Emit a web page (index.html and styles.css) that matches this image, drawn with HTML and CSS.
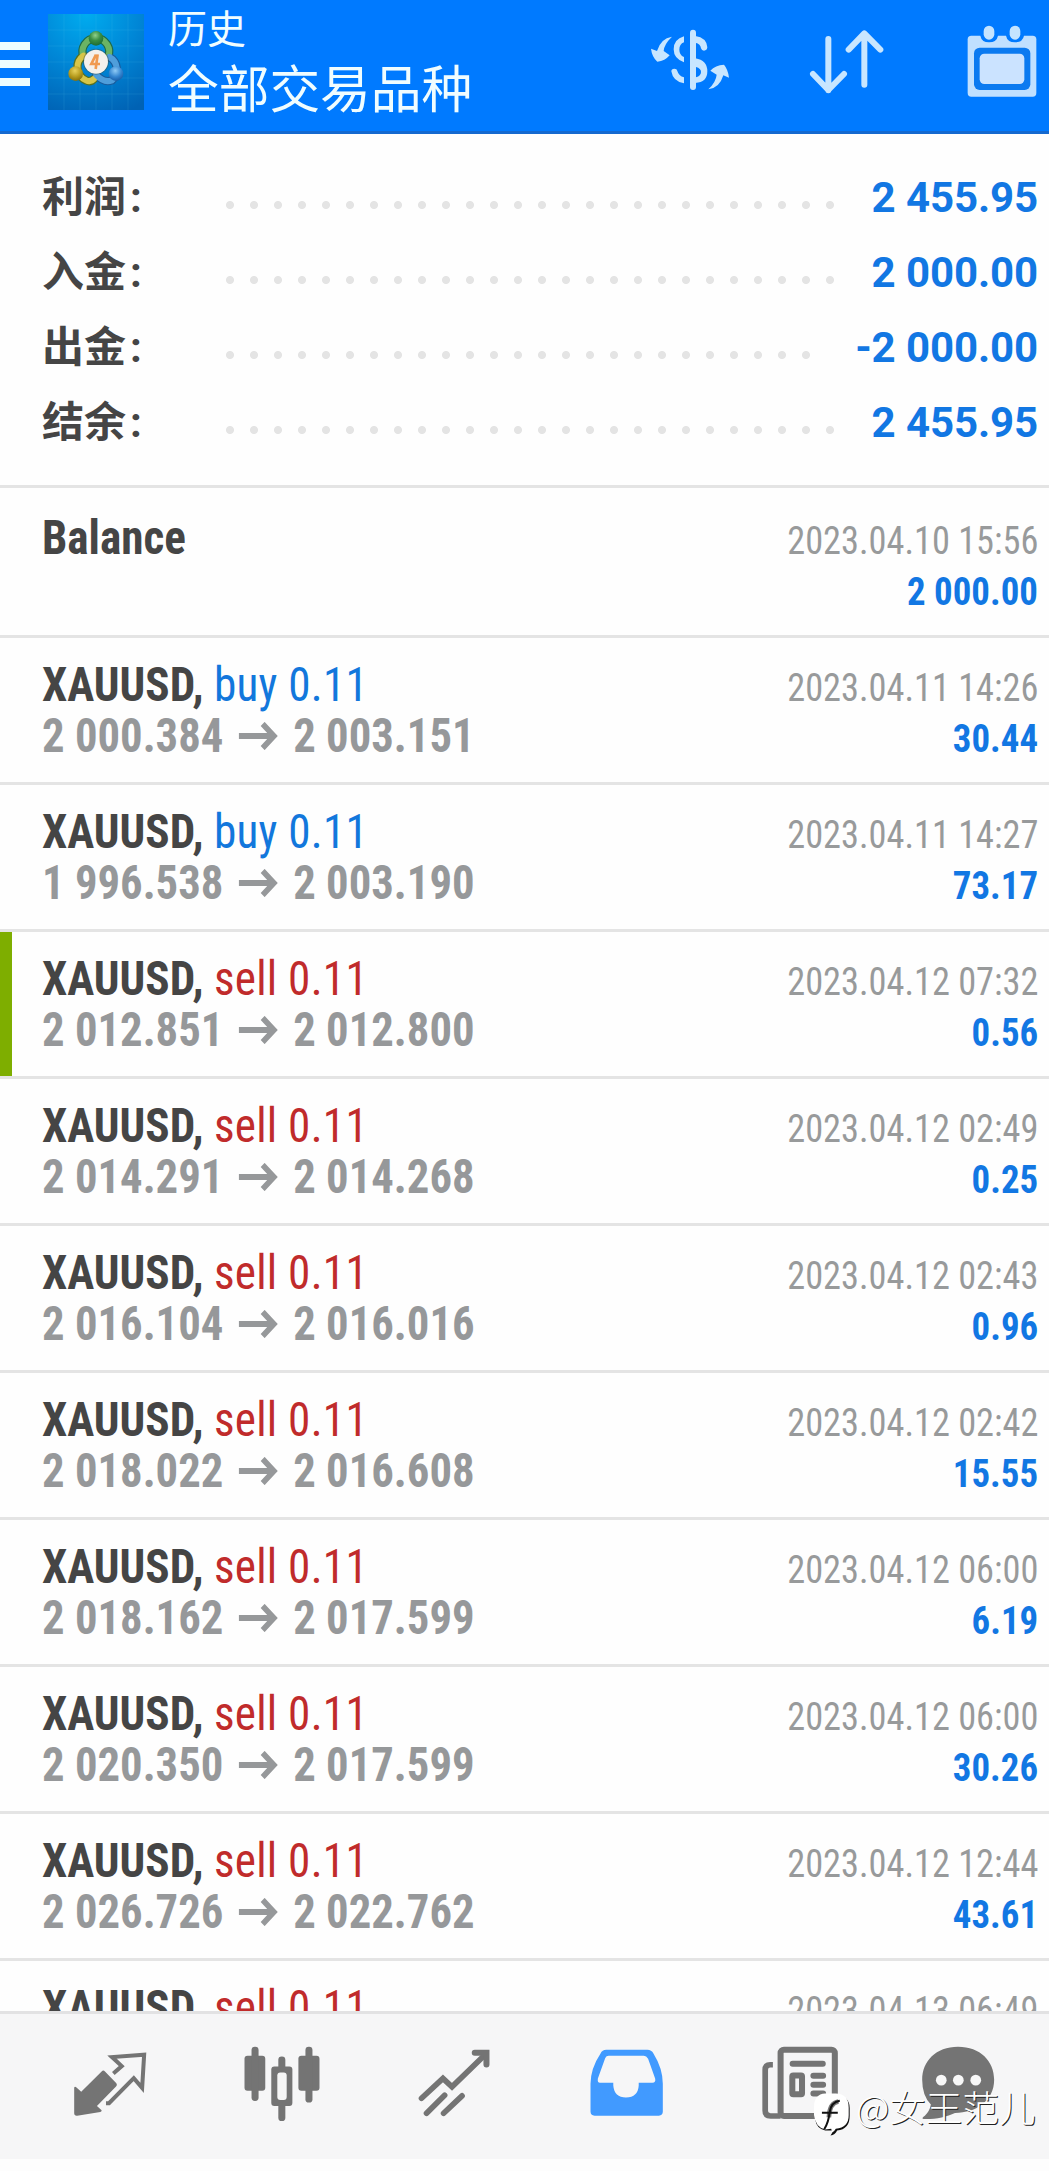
FILE: index.html
```
<!DOCTYPE html>
<html lang="zh-CN">
<head>
<meta charset="utf-8">
<title>历史</title>
<link rel="stylesheet" href="styles.css">
</head>
<body>
<svg class="defs" width="0" height="0">
  <defs>
    <symbol id="arrow" viewBox="0 0 42 28"><path d="M0 14H36M25.5 2L37.5 14L25.5 26" fill="none" stroke="currentColor" stroke-width="6"/></symbol>
  </defs>
</svg>
<div class="app">
  <header class="topbar">
    <div class="menu"><i></i><i></i><i></i></div>
    <svg class="logo" viewBox="12 12 288 288">
      <defs>
        <radialGradient id="bg" cx=".4" cy="0" r="1.1"><stop offset="0" stop-color="#00acef"/><stop offset=".5" stop-color="#0086d6"/><stop offset="1" stop-color="#0062b4"/></radialGradient>
        <radialGradient id="gh" cx=".45" cy=".3" r=".7"><stop offset="0" stop-color="#8fd08a"/><stop offset=".5" stop-color="#3a8f44"/><stop offset="1" stop-color="#1d6b34"/></radialGradient>
        <radialGradient id="yh" cx=".45" cy=".3" r=".7"><stop offset="0" stop-color="#e8d25c"/><stop offset=".6" stop-color="#b59a1c"/><stop offset="1" stop-color="#84700f"/></radialGradient>
        <radialGradient id="bh" cx=".45" cy=".3" r=".7"><stop offset="0" stop-color="#8fcaf5"/><stop offset=".6" stop-color="#3485d0"/><stop offset="1" stop-color="#1a5ea8"/></radialGradient>
      </defs>
      <rect x="12" y="12" width="288" height="288" fill="url(#bg)"/>
      <path d="M60 12V300M108 12V300M156 12V300M204 12V300M252 12V300M12 60H300M12 108H300M12 156H300M12 204H300M12 252H300" stroke="#5cc8f2" stroke-opacity=".2" stroke-width="2"/>
      <g stroke-linecap="round" fill="none">
        <path d="M119 141A40 40 0 1 1 192 141" stroke="#1e6a4a" stroke-width="25"/>
        <path d="M118 137A43 43 0 0 0 126 211Q140 218 152 205" stroke="#57701f" stroke-width="25"/>
        <path d="M196 141A43 43 0 0 1 204 211Q180 220 157 195" stroke="#1a5c9c" stroke-width="25"/>
        <path d="M119 141A40 40 0 1 1 192 141" stroke="#6bb465" stroke-width="18"/>
        <path d="M118 137A43 43 0 0 0 126 211Q140 218 152 205" stroke="#d7c548" stroke-width="18"/>
        <path d="M196 141A43 43 0 0 1 204 211Q180 220 157 195" stroke="#4f9edb" stroke-width="18"/>
      </g>
      <circle cx="156" cy="85" r="22" fill="url(#gh)"/>
      <circle cx="95" cy="191" r="22" fill="url(#yh)"/>
      <circle cx="216" cy="191" r="22" fill="url(#bh)"/>
      <circle cx="156" cy="155" r="39" fill="#3b4d3f" opacity=".45"/>
      <circle cx="156" cy="155" r="36" fill="#f4f1ec"/>
      <path d="M156 134L142 162H168M161 133L155 177" fill="none" stroke="#f09a50" stroke-width="8"/>
    </svg>
    <div class="titles">
      <div class="sub">历史</div>
      <div class="main">全部交易品种</div>
    </div>
    <div class="tools">
      <svg width="80" height="64" viewBox="150 85 240 192" fill="#c8e6ff">
        <rect x="270" y="90" width="18" height="181" rx="9"/>
        <path d="M252 110V128Q238 133 238 150Q238 166 252 172V188Q221 177 221 149Q221 119 252 110ZM214 215Q214 207 223 207Q231 207 232 214Q236 229 252 233V251Q219 246 214 215Z"/>
        <path d="M286 109Q320 114 322 143Q321 153 312 153Q305 153 303 146Q302 133 286 129ZM286 176Q322 182 322 215Q322 248 286 250ZM288 202V233Q303 229 303 217Q303 206 288 202Z" fill-rule="evenodd"/>
        <path d="M216 111Q192 134 191 154L209 167Q195 184 172 186Q156 172 153 147L171 154Q182 116 216 111Z"/>
        <path d="M325 269Q348 247 350 225L331 213Q346 196 372 195Q384 209 387 234L370 227Q359 265 325 269Z"/>
      </svg>
      <svg width="80" height="72" viewBox="620 77 240 216" fill="none" stroke="#c8e6ff" stroke-width="18" stroke-linecap="round" stroke-linejoin="round">
        <path d="M684 116V270M638 221L684 269L731 221M792 253V100M745 148L792 99L840 148"/>
      </svg>
      <svg width="72" height="74" viewBox="1098 72 216 222">
        <rect x="1103" y="107" width="206" height="183" rx="11" fill="#c0e0ff"/>
        <path d="M1141 100H1194V107Q1190 127 1167 127Q1145 127 1141 107ZM1218 100H1272V107Q1268 127 1245 127Q1222 127 1218 107Z" fill="#007aff"/>
        <rect x="1122" y="143" width="169" height="127" rx="17" fill="#0b7af0"/>
        <rect x="1139" y="161" width="134" height="91" rx="14" fill="#cbe3ff"/>
        <rect x="1151" y="77" width="32" height="42" rx="16" fill="#c4e4ff"/>
        <rect x="1229" y="77" width="32" height="42" rx="16" fill="#c4e4ff"/>
      </svg>
    </div>
  </header>

  <section class="summary">
    <div class="sum"><span class="label">利润<span class="colon">:</span></span><span class="dots"></span><span class="value">2 455.95</span></div>
    <div class="sum"><span class="label">入金<span class="colon">:</span></span><span class="dots"></span><span class="value">2 000.00</span></div>
    <div class="sum"><span class="label">出金<span class="colon">:</span></span><span class="dots short"></span><span class="value">-2 000.00</span></div>
    <div class="sum"><span class="label">结余<span class="colon">:</span></span><span class="dots"></span><span class="value">2 455.95</span></div>
  </section>

  <main class="deals">
    <div class="deal balance"><div class="name"><b>Balance</b></div><div class="date">2023.04.10 15:56</div><div class="price">&nbsp;</div><div class="profit">2 000.00</div></div>
    <div class="deal"><div class="name"><b>XAUUSD,</b> <span class="buy">buy 0.11</span></div><div class="date">2023.04.11 14:26</div><div class="price">2 000.384<svg class="to"><use href="#arrow"/></svg>2 003.151</div><div class="profit">30.44</div></div>
    <div class="deal"><div class="name"><b>XAUUSD,</b> <span class="buy">buy 0.11</span></div><div class="date">2023.04.11 14:27</div><div class="price">1 996.538<svg class="to"><use href="#arrow"/></svg>2 003.190</div><div class="profit">73.17</div></div>
    <div class="deal marked"><div class="name"><b>XAUUSD,</b> <span class="sell">sell 0.11</span></div><div class="date">2023.04.12 07:32</div><div class="price">2 012.851<svg class="to"><use href="#arrow"/></svg>2 012.800</div><div class="profit">0.56</div></div>
    <div class="deal"><div class="name"><b>XAUUSD,</b> <span class="sell">sell 0.11</span></div><div class="date">2023.04.12 02:49</div><div class="price">2 014.291<svg class="to"><use href="#arrow"/></svg>2 014.268</div><div class="profit">0.25</div></div>
    <div class="deal"><div class="name"><b>XAUUSD,</b> <span class="sell">sell 0.11</span></div><div class="date">2023.04.12 02:43</div><div class="price">2 016.104<svg class="to"><use href="#arrow"/></svg>2 016.016</div><div class="profit">0.96</div></div>
    <div class="deal"><div class="name"><b>XAUUSD,</b> <span class="sell">sell 0.11</span></div><div class="date">2023.04.12 02:42</div><div class="price">2 018.022<svg class="to"><use href="#arrow"/></svg>2 016.608</div><div class="profit">15.55</div></div>
    <div class="deal"><div class="name"><b>XAUUSD,</b> <span class="sell">sell 0.11</span></div><div class="date">2023.04.12 06:00</div><div class="price">2 018.162<svg class="to"><use href="#arrow"/></svg>2 017.599</div><div class="profit">6.19</div></div>
    <div class="deal"><div class="name"><b>XAUUSD,</b> <span class="sell">sell 0.11</span></div><div class="date">2023.04.12 06:00</div><div class="price">2 020.350<svg class="to"><use href="#arrow"/></svg>2 017.599</div><div class="profit">30.26</div></div>
    <div class="deal"><div class="name"><b>XAUUSD,</b> <span class="sell">sell 0.11</span></div><div class="date">2023.04.12 12:44</div><div class="price">2 026.726<svg class="to"><use href="#arrow"/></svg>2 022.762</div><div class="profit">43.61</div></div>
    <div class="deal"><div class="name"><b>XAUUSD,</b> <span class="sell">sell 0.11</span></div><div class="date">2023.04.13 06:49</div></div>
  </main>

  <nav class="tabs">
    <div class="tab"><svg viewBox="208.5 310 239 239">
      <path d="M303 395Q308 390 313 395L347 430Q351 435 346 440L289 498L303 511Q304 515 299 516L230 527Q221 528 221 519V444Q222 439 227 442L242 456Z" fill="#747474"/>
      <path d="M338 401L363 379L334 352L430 345L424 444L399 415L325 490H316" fill="none" stroke="#747474" stroke-width="12"/>
    </svg></div>
    <div class="tab"><svg viewBox="721.5 310 239 239" fill="#747474">
      <rect x="729" y="348" width="62" height="105" rx="9"/><rect x="750" y="321" width="21" height="162" rx="10"/>
      <rect x="890" y="348" width="63" height="105" rx="9"/><rect x="911" y="321" width="21" height="167" rx="10"/>
      <rect x="809" y="380" width="63" height="118" rx="9"/><rect x="830" y="350" width="21" height="193" rx="10"/>
      <rect x="827" y="398" width="28" height="82" rx="9" fill="#f6f6f6"/>
    </svg></div>
    <div class="tab"><svg viewBox="1234.5 310 239 239" fill="none" stroke="#747474" stroke-width="17" stroke-linecap="round">
      <path d="M1257 475L1321 416L1348 441L1449 343"/>
      <path d="M1272 520L1326 466M1323 520L1378 468"/>
      <path d="M1416 339H1451V374" stroke-width="18"/>
    </svg></div>
    <div class="tab"><svg viewBox="182.5 310 239 239">
      <path d="M243 330H366Q378 330 384 341Q412 386 412 432V515Q412 527 400 527H208Q196 527 196 515V432Q196 386 226 341Q231 330 243 330ZM250 348Q243 348 240 355L218 416Q216 429 224 429H264V437Q267 473 302 473Q338 472 340 437V429H381Q392 428 389 416L368 357Q363 348 355 348Z" fill="#419aff" fill-rule="evenodd"/>
    </svg></div>
    <div class="tab"><svg viewBox="697.5 310 239 239" fill="none" stroke="#747474">
      <rect x="765" y="330" width="162" height="198" rx="10" stroke-width="18"/>
      <path d="M742 375H734Q719 375 719 390V512Q719 528 735 528H765" stroke-width="17"/>
      <path d="M801 372H891M863 408H892M863 435H892M863 461H892" stroke-width="18" stroke-linecap="round"/>
      <rect x="800" y="407" width="29" height="56" rx="3" stroke-width="18"/>
    </svg></div>
    <div class="tab last"><svg viewBox="1175.5 310 239 239">
      <path d="M1295 321C1362 321 1403 364 1403 420C1403 482 1350 519 1286 519C1261 531 1228 538 1192 537C1186 535 1190 531 1196 527Q1210 515 1214 494Q1188 468 1188 420C1188 364 1229 321 1295 321Z" fill="#747474"/>
      <g fill="#f8f8f8"><circle cx="1245" cy="421" r="16"/><circle cx="1296" cy="421" r="16"/><circle cx="1348" cy="421" r="16"/></g>
    </svg></div>
    <div class="watermark">
      <svg viewBox="42 36 112 132" width="37" height="44">
        <path d="M84 46H110Q150 48 150 84V108Q150 148 112 152Q106 165 92 167Q98 160 98 152L76 152Q50 146 46 120Z" fill="#111"/>
        <path d="M76 40H108Q147 42 147 82V106Q147 143 108 147Q104 156 92 162Q98 156 94 147L76 149Q46 142 42 105V82Q42 42 76 40Z" fill="#fff"/>
        <path d="M87 112Q89 68 116 64" fill="none" stroke="#777" stroke-width="14"/>
        <path d="M73 148Q86 128 89 98Q93 66 120 62M66 98H114" fill="none" stroke="#111" stroke-width="6"/>
      </svg>
      <span>@女王范儿</span>
    </div>
  </nav>
</div>
</body>
</html>
```
FILE: styles.css
```
* { box-sizing: border-box; }
body {
  margin: 0;
  background: #fdfdfd;
  font-family: Roboto, "Noto Sans CJK SC", sans-serif;
}
.defs { position: absolute; }
.app {
  display: flex;
  flex-direction: column;
  width: 1049px;
  height: 2171px;
  overflow: hidden;
}

/* top bar */
.topbar {
  display: flex;
  flex: none;
  height: 134px;
  background: #007aff;
  border-bottom: 3px solid #1569cf;
}
.menu {
  display: flex;
  flex-direction: column;
  gap: 10px;
  width: 30px;
  padding-top: 42px;
}
.menu i { height: 8px; background: #edfdff; }
.logo { width: 96px; height: 96px; margin: 14px 0 0 18px; }
.titles {
  margin-left: 24px;
  color: #f0fdff;
  font-family: "Noto Sans CJK SC", sans-serif;
}
.sub { font-size: 39px; line-height: 52px; }
.main { font-size: 50.7px; line-height: 68px; }
.tools { display: flex; margin-left: auto; }
.tools svg:nth-child(1) { margin: 28px 77px 0 0; }
.tools svg:nth-child(2) { margin: 26px 79px 0 0; }
.tools svg:nth-child(3) { margin: 24px 11px 0 0; }

/* account totals */
.summary {
  flex: none;
  height: 354px;
  padding: 26px 11px 0 42px;
  background: #fefefe;
  border-bottom: 3px solid #e4e4e4;
}
.sum {
  display: flex;
  align-items: baseline;
  height: 75px;
  font-size: 42px;
  line-height: 75px;
  font-weight: 700;
}
.label { width: 176px; color: #454545; }
.colon { margin-left: 4px; }
.dots {
  width: 624px;
  height: 75px;
  background: radial-gradient(circle at 12px 45px, #e4e4e4 3.6px, transparent 4.4px) 0 0 / 24px 75px;
  align-self: flex-start;
}
.dots.short { width: 600px; }
.value { margin-left: auto; color: #1277e3; letter-spacing: -.1px; }

/* deal list */
.deals { flex: 1; overflow: hidden; min-height: 0; background: #fefefe; }
.deal {
  display: grid;
  grid-template-columns: 1fr auto;
  grid-template-rows: 51px 51px;
  align-items: baseline;
  height: 147px;
  padding: 21px 11px 0 42px;
  border-bottom: 3px solid #e4e4e4;
  font-stretch: 75%;
  font-size: 48px;
  line-height: 51px;
  white-space: nowrap;
}
.deal.balance { height: 150px; padding-top: 24px; }
.deal.marked { background: linear-gradient(#7eae00, #7eae00) 0 0 / 12px 144px no-repeat; }
.name, .price { transform-origin: 0 0; }
.name { color: #454545; transform: scaleX(.94); }
.buy, .sell { letter-spacing: .3px; }
.buy { color: #1277dc; }
.sell { color: #c02b2b; }
.price {
  display: flex;
  align-items: baseline;
  color: #96989a;
  font-weight: 700;
  transform: scaleX(.931);
}
.to { width: 45px; height: 28px; margin: 0 15px 0 15px; transform: translateY(-2px); }
.date, .profit {
  justify-self: end;
  font-size: 39.4px;
  transform-origin: 100% 0;
}
.date { color: #989a9b; transform: scaleX(.922); }
.profit { color: #1277e3; font-weight: 700; transform: scaleX(.936); }

/* bottom tabs */
.tabs {
  position: relative;
  display: flex;
  flex: none;
  height: 148px;
  margin-bottom: 12px;
  padding-left: 24px;
  background: #f6f6f7;
  border-top: 3px solid #e2e2e3;
}
.tab { width: 172px; padding-top: 29px; text-align: center; }
.tab.last { width: 148px; }
.tab svg { width: 80px; height: 80px; }
.watermark {
  position: absolute;
  left: 814px;
  top: 78px;
  display: flex;
  gap: 5px;
  color: #fff;
  font: 300 36.6px/30px "Noto Sans CJK SC", sans-serif;
  text-shadow: 1px 1px 0 #222;
}
```
